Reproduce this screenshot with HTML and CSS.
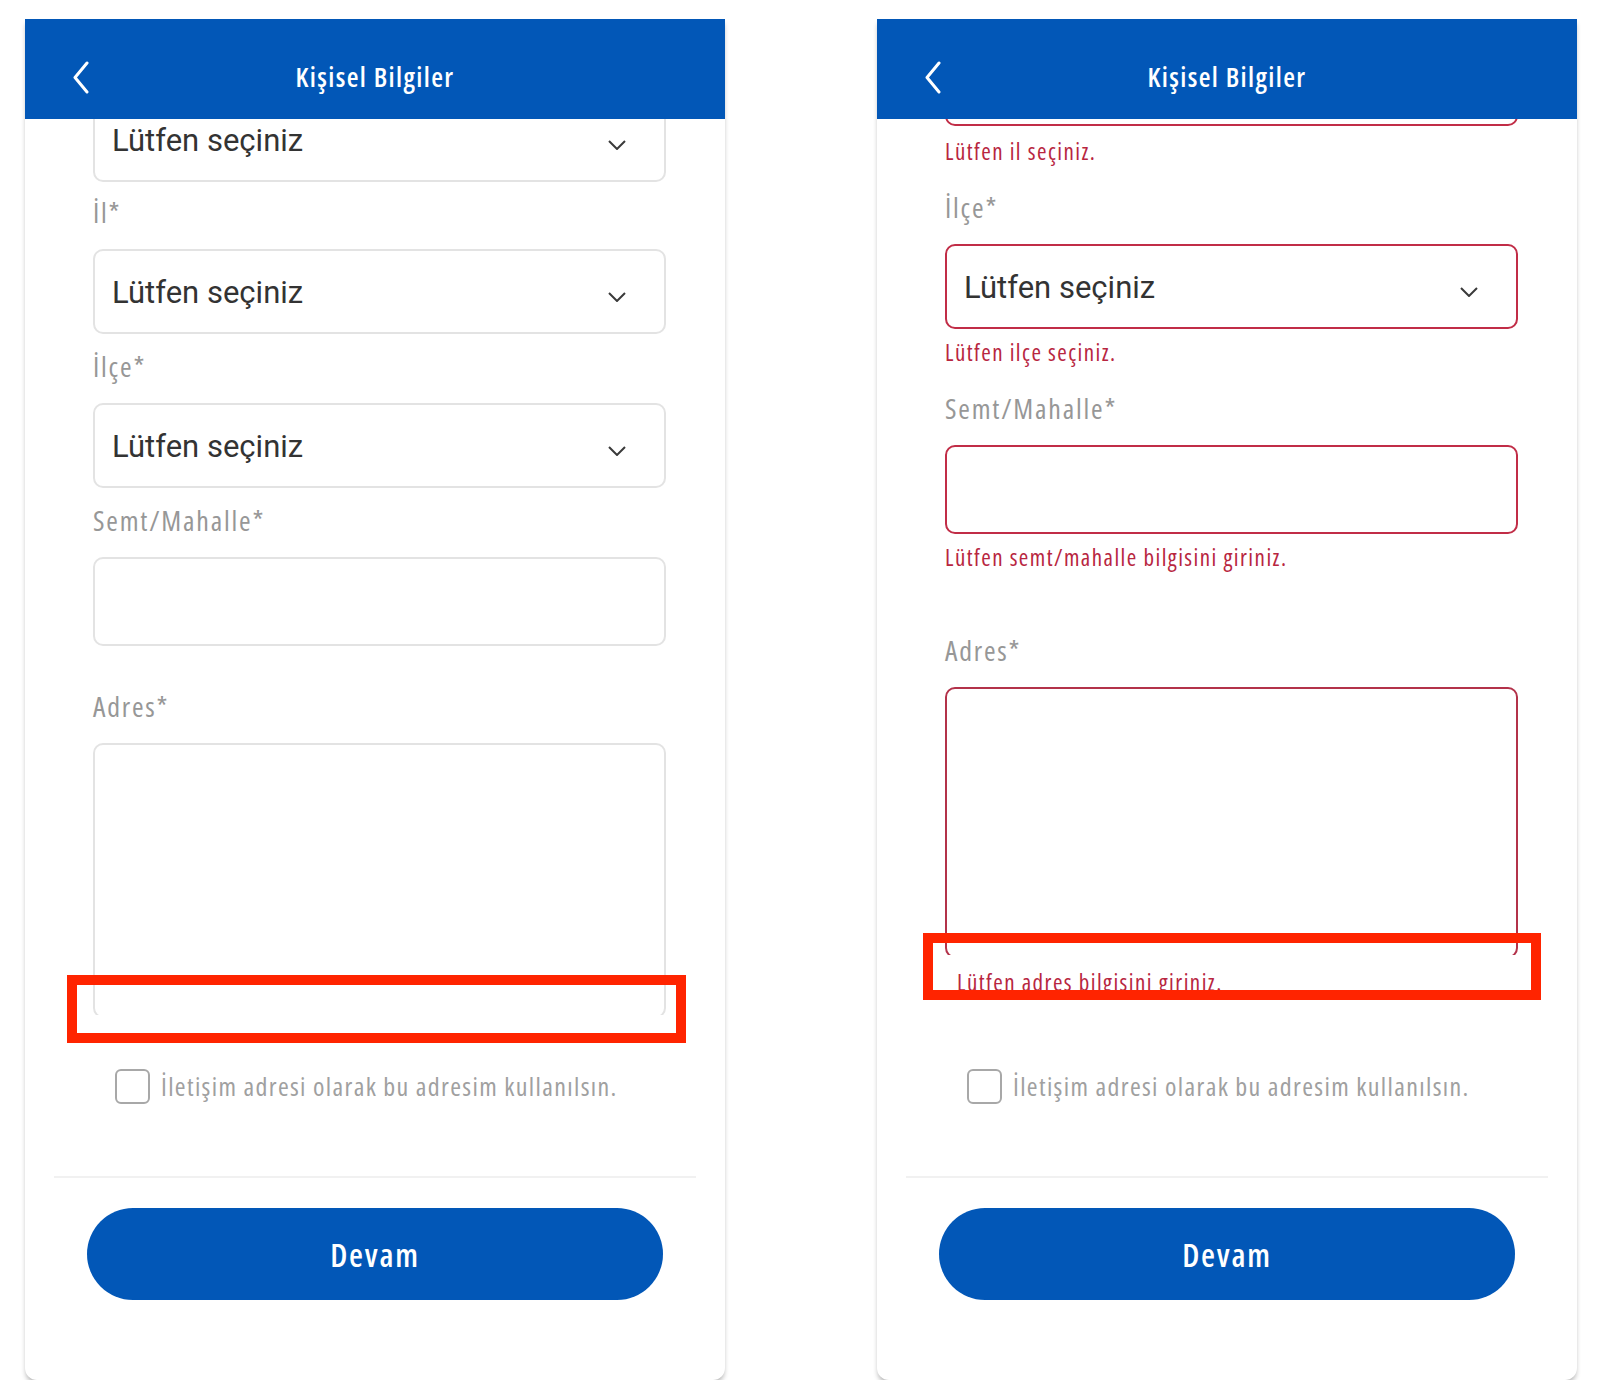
FILE: index.html
```html
<!DOCTYPE html>
<html lang="tr">
<head>
<meta charset="utf-8">
<title>Kişisel Bilgiler</title>
<link rel="stylesheet" href="styles.css">
</head>
<body>
<div class="stage">

  <section class="phone">
    <header class="appbar">
      <svg class="back" viewBox="0 0 17 33" aria-hidden="true"><path d="M15 2 L3 16.5 L15 31"/></svg>
      <h1 class="appbar-title">Kişisel Bilgiler</h1>
      <span></span>
    </header>
    <div class="viewport">
      <div class="form form--plain">
        <div class="control"><span>Lütfen seçiniz</span><svg class="caret" viewBox="0 0 18 10"><polyline points="1,1 9,9 17,1"/></svg></div>
        <div class="field-label field-label--first">İl*</div>
        <div class="control"><span>Lütfen seçiniz</span><svg class="caret" viewBox="0 0 18 10"><polyline points="1,1 9,9 17,1"/></svg></div>
        <div class="field-label">İlçe*</div>
        <div class="control"><span>Lütfen seçiniz</span><svg class="caret" viewBox="0 0 18 10"><polyline points="1,1 9,9 17,1"/></svg></div>
        <div class="field-label">Semt/Mahalle*</div>
        <div class="control control--input"></div>
        <div class="field-label field-label--spaced">Adres*</div>
        <div class="textarea-clip"><div class="textarea"></div></div>
        <div class="consent"><span class="checkbox"></span><span class="consent-text">İletişim adresi olarak bu adresim kullanılsın.</span></div>
      </div>
    </div>
    <div class="footer">
      <div class="divider"></div>
      <button class="cta" type="button">Devam</button>
    </div>
    <div class="annot annot--left"></div>
  </section>

  <section class="phone">
    <header class="appbar">
      <svg class="back" viewBox="0 0 17 33" aria-hidden="true"><path d="M15 2 L3 16.5 L15 31"/></svg>
      <h1 class="appbar-title">Kişisel Bilgiler</h1>
      <span></span>
    </header>
    <div class="viewport">
      <div class="form form--errors">
        <div class="control control--error"></div>
        <div class="error error--first">Lütfen il seçiniz.</div>
        <div class="field-label">İlçe*</div>
        <div class="control control--error"><span>Lütfen seçiniz</span><svg class="caret" viewBox="0 0 18 10"><polyline points="1,1 9,9 17,1"/></svg></div>
        <div class="error">Lütfen ilçe seçiniz.</div>
        <div class="field-label">Semt/Mahalle*</div>
        <div class="control control--input control--error"></div>
        <div class="error">Lütfen semt/mahalle bilgisini giriniz.</div>
        <div class="field-label field-label--spaced">Adres*</div>
        <div class="textarea-clip"><div class="textarea textarea--error"></div></div>
        <div class="error error--inset">Lütfen adres bilgisini giriniz.</div>
        <div class="consent"><span class="checkbox"></span><span class="consent-text">İletişim adresi olarak bu adresim kullanılsın.</span></div>
      </div>
    </div>
    <div class="footer">
      <div class="divider"></div>
      <button class="cta" type="button">Devam</button>
    </div>
    <div class="annot annot--right"></div>
  </section>

</div>
</body>
</html>
```
FILE: styles.css
```css
* { box-sizing: border-box; }

html, body {
  margin: 0;
  background: #ffffff;
}

body {
  font-family: "Open Sans", "Liberation Sans", sans-serif;
}

.stage {
  display: flex;
  align-items: flex-start;
  gap: 152px;
  padding: 19px 0 0 25px;
}

.phone {
  position: relative;
  width: 700px;
  height: 1361px;
  background: #ffffff;
  border-radius: 0 0 12px 12px;
  box-shadow: 0 4px 5px -1px rgba(0, 0, 0, 0.3);
  display: flex;
  flex-direction: column;
  overflow: hidden;
}

/* ---------- app bar ---------- */
.appbar {
  flex: none;
  height: 100px;
  padding-top: 16px;
  background: #0257b7;
  display: grid;
  grid-template-columns: 1fr auto 1fr;
  align-items: center;
}

.back {
  width: 17px;
  height: 33px;
  margin-left: 47px;
  fill: none;
  stroke: #ffffff;
  stroke-width: 3;
  stroke-linecap: round;
  stroke-linejoin: round;
}

.appbar-title {
  margin: 0;
  color: #ffffff;
  font-size: 27px;
  line-height: 40px;
  font-weight: 600;
  font-stretch: 85%;
  letter-spacing: 1.4px;
}

/* ---------- scrolled form ---------- */
.viewport {
  flex: 1;
  overflow: hidden;
}

.form {
  display: flex;
  flex-direction: column;
  padding: 0 59px 0 68px;
}

.form--plain { margin-top: -22px; }
.form--errors { margin-top: -78px; }

.field-label {
  margin: 14px 0 19px;
  font-size: 28px;
  line-height: 36px;
  color: #979797;
  font-stretch: 85%;
  letter-spacing: 1.8px;
}

.form--plain .field-label--first { margin-top: 12px; }
.form--plain .field-label--spaced { margin-top: 42px; }
.form--errors .field-label { margin-top: 23px; }
.form--errors .field-label--spaced { margin-top: 60px; }

.control {
  flex: none;
  height: 85px;
  border: 2px solid #e3e3e3;
  border-radius: 10px;
  display: flex;
  align-items: center;
  justify-content: space-between;
  padding: 2px 38px 0 17px;
  font-family: Roboto, "Liberation Sans", sans-serif;
  font-size: 31px;
  color: #333333;
}

.control--input { height: 89px; }

.control--error { border-color: #c12d47; }

.caret {
  width: 18px;
  height: 10px;
  margin-top: 8px;
  fill: none;
  stroke: #3a3a3a;
  stroke-width: 2;
}

.textarea-clip {
  flex: none;
  height: 272px;
  overflow: hidden;
}

.form--errors .textarea-clip { height: 268px; }

.textarea {
  height: calc(100% + 3px);
  border: 2px solid #e3e3e3;
  border-radius: 10px;
}

.textarea--error { border-color: #b3324a; }

.error {
  margin-top: 8px;
  font-size: 23px;
  line-height: 30px;
  color: #b8263f;
  font-stretch: 85%;
  letter-spacing: 1.45px;
}

.error--first { margin-top: 10px; }

.error--inset {
  margin-top: 12px;
  padding-left: 12px;
}

/* ---------- consent ---------- */
.consent {
  display: flex;
  align-items: center;
  gap: 11px;
  margin: 53px 0 0 22px;
}

.form--errors .consent { margin-top: 71px; }

.checkbox {
  flex: none;
  width: 35px;
  height: 35px;
  border: 2px solid #a8a8a8;
  border-radius: 6px;
}

.consent-text {
  font-size: 26px;
  font-weight: 400;
  color: #a0a0a0;
  font-stretch: 85%;
  letter-spacing: 1.35px;
  white-space: nowrap;
}

/* ---------- footer ---------- */
.footer {
  flex: none;
  padding-bottom: 80px;
}

.divider {
  height: 2px;
  margin: 0 29px;
  background: #f1f1f1;
}

.cta {
  display: block;
  width: 576px;
  height: 92px;
  margin: 30px 0 0 62px;
  border: 0;
  border-radius: 46px;
  background: #0257b7;
  color: #ffffff;
  font-family: "Open Sans", "Liberation Sans", sans-serif;
  font-size: 32px;
  font-weight: 600;
  font-stretch: 85%;
  letter-spacing: 1.8px;
}

/* ---------- annotation overlays ---------- */
.annot {
  position: absolute;
  border: 10px solid #ff2400;
  pointer-events: none;
}

.annot--left {
  left: 42px;
  top: 956px;
  width: 619px;
  height: 68px;
}

.annot--right {
  left: 46px;
  top: 914px;
  width: 618px;
  height: 67px;
}
```
